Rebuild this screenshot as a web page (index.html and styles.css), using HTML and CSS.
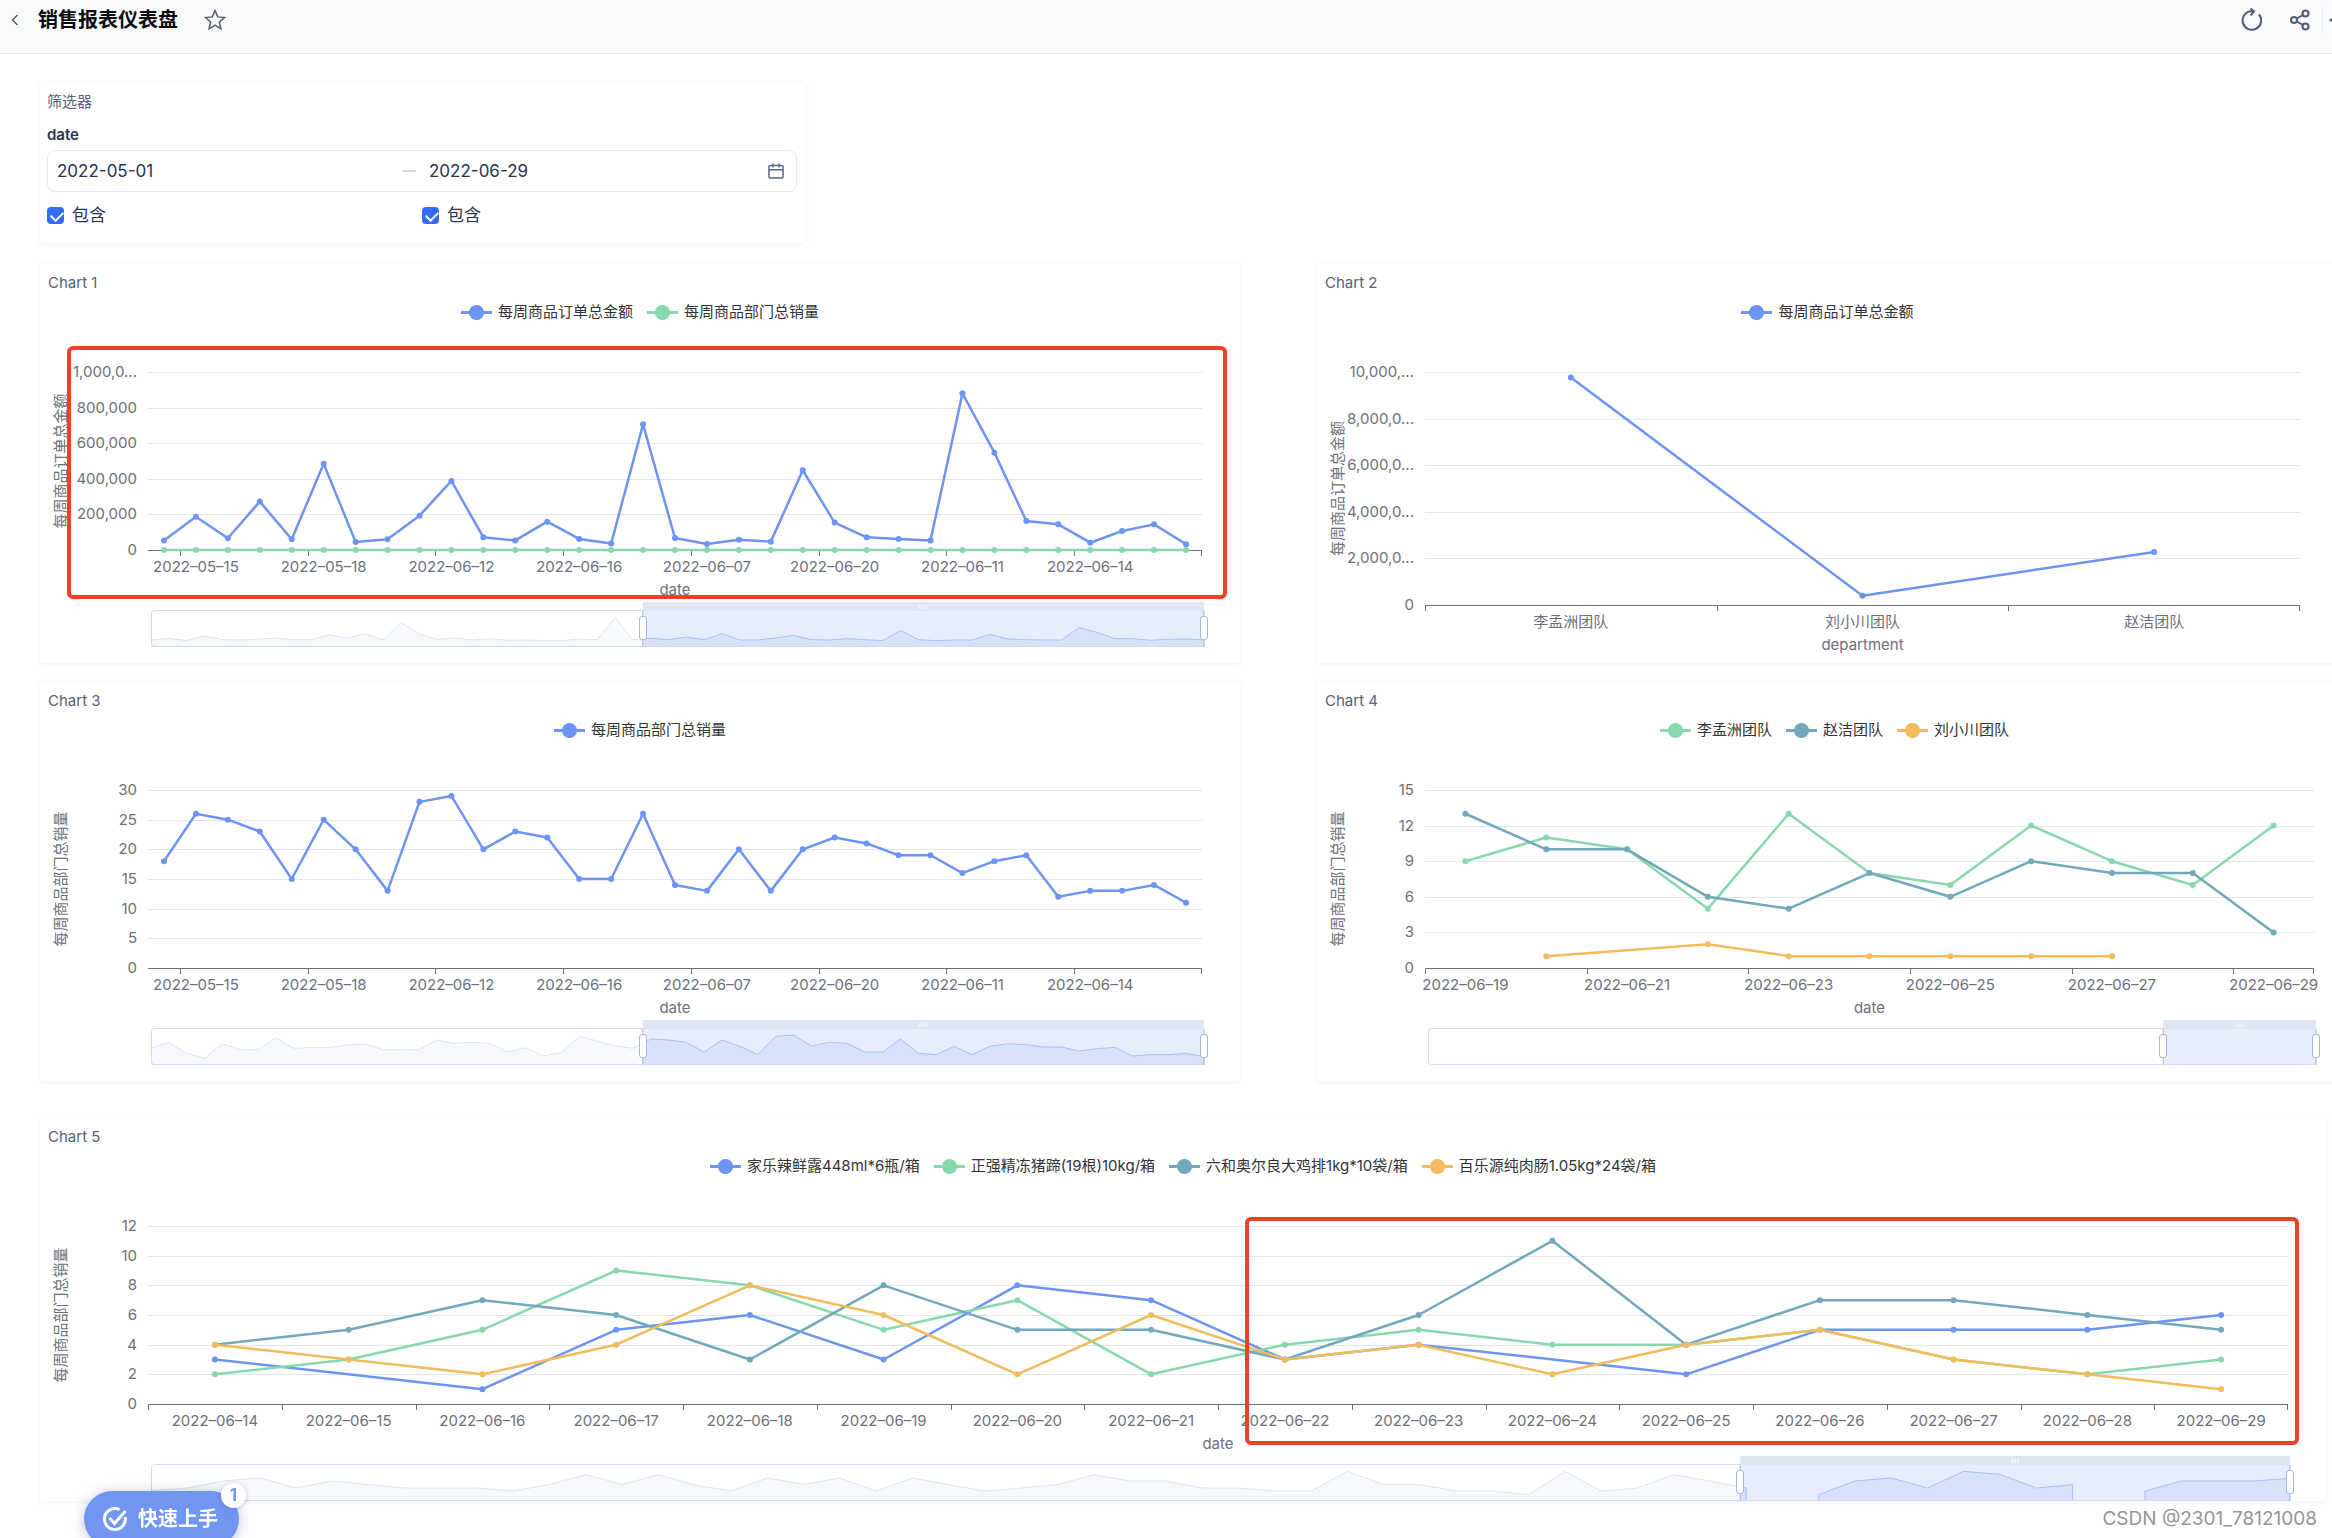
FILE: index.html
```html
<!DOCTYPE html>
<html lang="zh-CN">
<head>
<meta charset="utf-8">
<meta name="viewport" content="width=device-width, initial-scale=1">
<title>销售报表仪表盘</title>
<link rel="stylesheet" href="styles.css">
</head>
<body>
<header class="topbar">
  <button class="icon-btn back" type="button" aria-label="返回">
    <svg width="8" height="12" viewBox="0 0 8 12"><path d="M6.5 1 1.5 6l5 5"/></svg>
  </button>
  <h1 class="topbar-title">销售报表仪表盘</h1>
  <button class="icon-btn star" type="button" aria-label="收藏">
    <svg width="22" height="22" viewBox="0 0 22 22"><path d="M11 1.500l2.700 6.400 6.800.6-5.200 4.500 1.600 6.800-5.900-3.600-5.900 3.600 1.600-6.800L1.500 8.500l6.800-.6z"/></svg>
  </button>
  <div class="topbar-actions">
    <button class="icon-btn" type="button" aria-label="刷新">
      <svg width="22" height="24" viewBox="0 0 22 24"><path d="M19 6.500A9.300 9.300 0 1 1 11 3.200h3M10.500.5l3.500 2.900-3.400 4"/></svg>
    </button>
    <button class="icon-btn share" type="button" aria-label="分享">
      <svg width="20" height="22" viewBox="0 0 20 22"><circle cx="4" cy="11" r="3"/><circle cx="15.500" cy="4.500" r="3"/><circle cx="15.500" cy="17.500" r="3"/><path d="M6.700 9.500 12.900 6M6.700 12.500l6.200 3.500"/></svg>
    </button>
    <span class="divider"></span>
    <button class="icon-btn more" type="button" aria-label="更多">
      <svg width="20" height="20" viewBox="0 0 20 20"><circle class="dot" cx="3" cy="10" r="1.500"/><circle class="dot" cx="10" cy="10" r="1.500"/><circle class="dot" cx="17" cy="10" r="1.500"/></svg>
    </button>
  </div>
</header>

<main class="board">
  <section class="card filter">
    <h2 class="card-title">筛选器</h2>
    <label class="filter-name" for="date-from">date</label>
    <div class="range">
      <input class="range-input" id="date-from" type="text" value="2022-05-01">
      <span class="range-dash"></span>
      <input class="range-input" type="text" value="2022-06-29" aria-label="结束日期">
      <svg class="range-icon" width="16" height="16" viewBox="0 0 16 16"><rect x="1" y="2.500" width="14" height="12.500" rx="1"/><path d="M1 6.800h14M4.800.5v4M11.200.5v4"/></svg>
    </div>
    <div class="includes">
      <label class="check"><input type="checkbox" checked>包含</label>
      <label class="check"><input type="checkbox" checked>包含</label>
    </div>
  </section>

  <div class="pairs">
    <section class="card" data-chart="chart1">
      <h2 class="card-title">Chart 1</h2>
      <ul class="legend">
        <li class="key blue">每周商品订单总金额</li>
        <li class="key green">每周商品部门总销量</li>
      </ul>
      <div class="marker marker-whole"></div>
    </section>
    <section class="card" data-chart="chart2">
      <h2 class="card-title">Chart 2</h2>
      <ul class="legend"><li class="key blue">每周商品订单总金额</li></ul>
    </section>
    <section class="card" data-chart="chart3">
      <h2 class="card-title">Chart 3</h2>
      <ul class="legend"><li class="key blue">每周商品部门总销量</li></ul>
    </section>
    <section class="card card-wide" data-chart="chart4">
      <h2 class="card-title">Chart 4</h2>
      <ul class="legend">
        <li class="key green">李孟洲团队</li>
        <li class="key teal">赵洁团队</li>
        <li class="key orange">刘小川团队</li>
      </ul>
    </section>
  </div>

  <section class="card card-last" data-chart="chart5">
    <h2 class="card-title">Chart 5</h2>
    <ul class="legend">
      <li class="key blue">家乐辣鲜露448ml*6瓶/箱</li>
      <li class="key green">正强精冻猪蹄(19根)10kg/箱</li>
      <li class="key teal">六和奥尔良大鸡排1kg*10袋/箱</li>
      <li class="key orange">百乐源纯肉肠1.05kg*24袋/箱</li>
    </ul>
    <div class="marker marker-half"></div>
  </section>
</main>

<button class="quick" type="button">
  <svg width="26" height="26" viewBox="0 0 26 26"><path d="M17.500 3.600A10.500 10.500 0 1 0 23.200 11M7.500 12l5 5.500L23.500 5"/></svg>
  快速上手
  <span class="quick-badge">1</span>
</button>
<p class="credit">CSDN @2301_78121008</p>
<script src="charts.js"></script>
</body>
</html>
```

FILE: styles.css
```css
* { box-sizing: border-box; }

body {
  position: relative;
  min-height: 100vh;
  margin: 0;
  overflow: hidden;
  background: #fff;
  color: #2a3350;
  font: 15px/20px Inter, "Noto Sans CJK SC", sans-serif;
}

h1, h2, p, ul { margin: 0; padding: 0; }
ul { list-style: none; }

/* top bar */
.topbar {
  display: flex;
  align-items: center;
  height: 54px;
  padding: 0 0 14px 10px;
  border-bottom: 1px solid #e6e9f2;
  background: #f8f9fb;
}
.topbar-title {
  margin-left: 18px;
  color: #0b0d12;
  font-size: 20px;
  font-weight: 700;
  line-height: 28px;
}
.icon-btn {
  display: flex;
  align-items: center;
  justify-content: center;
  width: 20px;
  height: 24px;
  padding: 0;
  border: 0;
  background: none;
}
.icon-btn svg {
  flex: none;
  fill: none;
  stroke: #515c76;
  stroke-width: 2;
}
.icon-btn .dot { fill: #515c76; stroke: none; }
.back { width: 10px; }
.back svg, .star svg { stroke-width: 1.5; }
.star { margin-left: 27px; }
.topbar-actions {
  display: flex;
  align-items: center;
  margin: 0 -16px 0 auto;
}
.share { margin-left: 29px; }
.divider {
  width: 1px;
  height: 28px;
  margin: 0 5px 0 12px;
  background: #e6e9f2;
}

/* board */
.board { padding: 29px 6px 20px 40px; }
.card {
  position: relative;
  padding-top: 9px;
  background: #fff;
  box-shadow: 0 1px 5px rgba(30, 40, 70, .06);
}
.card-title {
  padding-left: 8px;
  color: #56617a;
  font-size: 15px;
  font-weight: 400;
  line-height: 20px;
}
.pairs {
  display: grid;
  grid-template-columns: 1200fr 1021fr;
  gap: 19px 77px;
  margin: 21px -12px 37px 0;
}
.card-wide { margin-right: -14px; }

/* filter */
.filter {
  display: flex;
  flex-direction: column;
  width: min(100%, 765px);
  padding: 9px 8px 16px 7px;
}
.filter .card-title { padding-left: 0; }
.filter-name { margin: 13px 0 5px; font-weight: 600; }
.range {
  display: grid;
  grid-template-columns: 346fr 26px 339fr 16px;
  align-items: center;
  height: 42px;
  padding: 0 12px 0 9px;
  border: 1px solid #e6e9f2;
  border-radius: 8px;
}
.range-input {
  width: 100%;
  padding: 0;
  border: 0;
  outline: 0;
  background: none;
  color: #2a3350;
  font: 17px/24px Inter, sans-serif;
}
.range-dash { width: 13px; height: 2px; background: #d3d6dc; }
.range-icon { fill: none; stroke: #5d6880; stroke-width: 1.5; }
.includes {
  display: grid;
  grid-template-columns: 1fr 1fr;
  margin-top: 11px;
}
.check {
  display: flex;
  align-items: center;
  gap: 8px;
  font-size: 17px;
  line-height: 24px;
}
.check input {
  width: 17px;
  height: 17px;
  margin: 0;
  appearance: none;
  border-radius: 4px;
  background: #336df4;
}
.check input::after {
  content: "";
  display: block;
  width: 10px;
  height: 6px;
  margin: 4px;
  border: solid #fff;
  border-width: 0 0 2px 2px;
  transform: rotate(-45deg);
}

/* legend */
.legend {
  display: flex;
  justify-content: center;
  gap: 14px;
  margin-top: 8px;
  color: #333;
  line-height: 22px;
  white-space: nowrap;
}
.key { display: flex; align-items: center; gap: 6px; }
.key::before {
  content: "";
  width: 31px;
  height: 15px;
  background:
    radial-gradient(circle at center, currentColor 7px, transparent 8px),
    linear-gradient(currentColor, currentColor) center / 100% 3px no-repeat;
}
.blue::before { color: #6e94f2; }
.green::before { color: #89d8ad; }
.teal::before { color: #72a8bc; }
.orange::before { color: #f2bc5c; }

/* plot */
.plot, .zoom-art { display: block; width: 100%; overflow: visible; }
.plot text { fill: #6e7079; font-size: 15px; }
.grid-line { stroke: #e0e6f1; shape-rendering: crispEdges; }
.axis-line { stroke: #6e7079; fill: none; shape-rendering: crispEdges; }
.series { fill: none; stroke-width: 2.5; stroke-linejoin: round; }

/* zoom strip */
.zoom {
  position: relative;
  height: 45px;
  margin: 0 36px 16px 111px;
}
.zoom-frame { fill: none; stroke: #d2dbee; }
.zoom-shade { fill: #f6f8fc; stroke: #dde4f1; }
.zoom-window { fill: #e7edfc; }
.zoom-shade-on { fill: #d7e1fa; stroke: #a9bff2; }
.zoom-grip { fill: #dfe5f1; }
.zoom-ticks { stroke: #fff; }
.zoom-edge { stroke: #acb8d1; }
.zoom-thumb {
  position: absolute;
  top: 14px;
  left: -4px;
  width: calc(100% + 8px);
  height: 24px;
  margin: 0;
  appearance: none;
  background: none;
  pointer-events: none;
}
.zoom-thumb::-webkit-slider-thumb {
  width: 8px;
  height: 24px;
  appearance: none;
  border: 1px solid #acb8d1;
  border-radius: 3px;
  background: #fff;
  pointer-events: auto;
}

/* red frames laid over the plots */
.marker {
  position: absolute;
  border: 4px solid #ea4127;
  border-radius: 6px;
}
.marker-whole { top: 82px; right: 13px; left: 27px; height: 253px; }
.marker-half { top: 99px; right: 27px; left: 52.7%; height: 228px; }

/* quick start */
.quick {
  position: fixed;
  bottom: -9px;
  left: 84px;
  display: flex;
  align-items: center;
  gap: 10px;
  height: 56px;
  padding: 0 21px 0 18px;
  border: 0;
  border-radius: 28px;
  background: #7096f2;
  box-shadow: 0 2px 14px rgba(40, 60, 110, .3);
  color: #fff;
  font: 700 20px/28px Inter, "Noto Sans CJK SC", sans-serif;
}
.quick svg { fill: none; stroke: #fff; stroke-width: 3; }
.quick-badge {
  position: absolute;
  top: -8px;
  right: -7px;
  width: 25px;
  height: 25px;
  border-radius: 50%;
  background: #fff;
  box-shadow: 0 1px 5px rgba(40, 60, 110, .25);
  color: #7096f2;
  font-size: 17px;
  line-height: 25px;
  text-align: center;
}
.credit {
  position: absolute;
  right: 15px;
  bottom: 5px;
  color: #939599;
  font-size: 19px;
  line-height: 28px;
}
```

FILE: charts.js
```js
const COLORS = { blue: '#6e94f2', green: '#89d8ad', teal: '#72a8bc', orange: '#f2bc5c' };
const GRID = { left: 108, right: 38, top: 49 };

function days(month, from, to) {
  const out = [];
  for (let d = from; d <= to; d++) out.push('2022–' + month + '–' + String(d).padStart(2, '0'));
  return out;
}

/* 33 visible days; every fourth one carries a label */
const sparse = Array(33).fill('');
['2022–05–15', '2022–05–18', '2022–06–12', '2022–06–16', '2022–06–07', '2022–06–20', '2022–06–11', '2022–06–14']
  .forEach((label, i) => { sparse[1 + i * 4] = label; });

const CHARTS = {
  chart1: {
    categories: sparse, first: 1, every: 4, max: 1000,
    yLabels: ['0', '200,000', '400,000', '600,000', '800,000', '1,000,0...'],
    xName: 'date', yName: '每周商品订单总金额',
    series: [
      ['blue', [54, 187, 66, 272, 60, 485, 45, 60, 193, 388, 71, 54, 159, 62, 36, 706, 67, 34, 58, 47, 448, 154, 71, 62, 54, 880, 547, 163, 144, 41, 107, 144, 32]],
      ['green', Array(33).fill(0)]
    ],
    zoom: { start: 46.7, shade: [21, 26, 19, 33, 22, 21, 24, 27, 22, 22, 37, 26, 40, 21, 74, 40, 23, 27, 21, 25, 20, 21, 19, 19, 24, 22, 89, 22, 26, 22, 30, 22, 40, 21, 21, 27, 35, 22, 21, 25, 22, 19, 50, 22, 19, 21, 21, 38, 24, 22, 21, 21, 58, 44, 25, 25, 20, 23, 24, 21] }
  },
  chart2: {
    categories: ['李孟洲团队', '刘小川团队', '赵洁团队'], first: 0, every: 1, max: 10,
    yLabels: ['0', '2,000,0...', '4,000,0...', '6,000,0...', '8,000,0...', '10,000,...'],
    xName: 'department', yName: '每周商品订单总金额',
    series: [['blue', [9.76, 0.4, 2.27]]]
  },
  chart3: {
    categories: sparse, first: 1, every: 4, max: 30,
    yLabels: ['0', '5', '10', '15', '20', '25', '30'],
    xName: 'date', yName: '每周商品部门总销量',
    series: [['blue', [18, 26, 25, 23, 15, 25, 20, 13, 28, 29, 20, 23, 22, 15, 15, 26, 14, 13, 20, 13, 20, 22, 21, 19, 19, 16, 18, 19, 12, 13, 13, 14, 11]]],
    zoom: { start: 46.7, shade: [51, 68, 35, 20, 64, 46, 46, 82, 50, 53, 53, 60, 63, 46, 46, 46, 75, 65, 68, 65, 39, 52, 27, 38, 86, 72, 57, 50, 78, 75, 68, 39, 75, 56, 31, 86, 90, 57, 68, 65, 39, 39, 78, 35, 31, 56, 31, 56, 64, 61, 54, 54, 42, 49, 53, 27, 31, 31, 35, 25] }
  },
  chart4: {
    categories: days('06', 19, 29), first: 0, every: 2, max: 15,
    yLabels: ['0', '3', '6', '9', '12', '15'],
    xName: 'date', yName: '每周商品部门总销量',
    series: [
      ['green', [9, 11, 10, 5, 13, 8, 7, 12, 9, 7, 12]],
      ['teal', [13, 10, 10, 6, 5, 8, 6, 9, 8, 8, 3]],
      ['orange', [null, 1, null, 2, 1, 1, 1, 1, 1, null, null]]
    ],
    zoom: { start: 82.8, shade: [] }
  },
  chart5: {
    categories: days('06', 14, 29), first: 0, every: 1, max: 12,
    yLabels: ['0', '2', '4', '6', '8', '10', '12'],
    xName: 'date', yName: '每周商品部门总销量',
    series: [
      ['blue', [3, null, 1, 5, 6, 3, 8, 7, 3, 4, null, 2, 5, 5, 5, 6]],
      ['green', [2, 3, 5, 9, 8, 5, 7, 2, 4, 5, 4, 4, 5, 3, 2, 3]],
      ['teal', [4, 5, 7, 6, 3, 8, 5, 5, 3, 6, 11, 4, 7, 7, 6, 5]],
      ['orange', [4, 3, 2, 4, 8, 6, 2, 6, 3, 4, 2, 4, 5, 3, 2, 1]]
    ],
    zoom: { start: 74.3, shade: [31, 39, 60, 69, 39, 60, 49, 39, 39, 39, 30, 50, 79, 50, 79, 48, 30, 69, 50, 69, 30, 69, 49, 30, 39, 49, 79, 60, 60, 39, 39, 30, 30, 89, 49, 49, 30, 30, 19, 89, 30, 39, 79, 60, 39, null, 19, 60, 69, 39, 89, 80, 39, 49, null, 30, 60, 60, 60, 68] }
  }
};

function plotMarkup(chart, width) {
  const right = width - GRID.right;
  const bottom = chart.zoom ? 227 : 282;
  const step = (right - GRID.left) / chart.categories.length;
  const yOf = v => bottom - v / chart.max * (bottom - GRID.top);
  const xOf = i => GRID.left + step * (i + 0.5);
  let s = '';

  chart.yLabels.forEach((label, i) => {
    const y = Math.round(bottom - i * (bottom - GRID.top) / (chart.yLabels.length - 1));
    if (i) s += `<line class="grid-line" x1="${GRID.left}" x2="${right}" y1="${y + 0.5}" y2="${y + 0.5}"/>`;
    s += `<text x="${GRID.left - 11}" y="${y + 5}" text-anchor="end">${label}</text>`;
  });

  let axis = `M${GRID.left} ${bottom + 0.5}H${right}`;
  for (let i = chart.first; i < chart.categories.length; i += chart.every) {
    axis += `M${Math.round(GRID.left + step * i) + 0.5} ${bottom}v6`;
    s += `<text x="${xOf(i)}" y="${bottom + 22}" text-anchor="middle">${chart.categories[i]}</text>`;
  }
  s += `<path class="axis-line" d="${axis}M${Math.round(right) - 0.5} ${bottom}v6"/>`;

  const midX = (GRID.left + right) / 2;
  const midY = (GRID.top + bottom) / 2;
  s += `<text x="${midX}" y="${bottom + 45}" text-anchor="middle">${chart.xName}</text>`;
  s += `<text transform="translate(26 ${midY}) rotate(-90)" text-anchor="middle">${chart.yName}</text>`;

  chart.series.forEach(([color, values]) => {
    const pts = values.map((v, i) => v === null ? null : [xOf(i), yOf(v)]).filter(Boolean);
    s += `<polyline class="series" stroke="${COLORS[color]}" points="${pts.join(' ')}"/>`;
    pts.forEach(p => { s += `<circle cx="${p[0]}" cy="${p[1]}" r="3" fill="${COLORS[color]}"/>`; });
  });
  return s;
}

function shadePath(shade, width) {
  const step = width / (shade.length - 1);
  let d = '', open = false, last = 0;
  shade.forEach((v, i) => {
    const x = i * step;
    if (v === null) {
      if (open) d += `L${last} 45Z`;
      open = false;
      return;
    }
    d += (open ? 'L' : `M${x} 45L`) + `${x} ${45 - v / 3}`;
    open = true;
    last = x;
  });
  return open ? d + `L${last} 45Z` : d;
}

function zoomMarkup(id, zoom, width) {
  const from = width * zoom.start / 100;
  const mid = Math.round((from + width) / 2);
  const d = shadePath(zoom.shade, width);
  return `<clipPath id="${id}-off"><rect x="0" y="0" width="${from}" height="45"/></clipPath>
    <clipPath id="${id}-on"><rect x="${from}" y="0" width="${width - from}" height="45"/></clipPath>
    <path class="zoom-shade" clip-path="url(#${id}-off)" d="${d}"/>
    <rect class="zoom-window" x="${from}" y="8" width="${width - from}" height="37"/>
    <path class="zoom-shade-on" clip-path="url(#${id}-on)" d="${d}"/>
    <rect class="zoom-frame" x=".5" y="8.5" width="${width - 1}" height="36" rx="3"/>
    <rect class="zoom-grip" x="${from}" y="0" width="${width - from}" height="9" rx="1"/>
    <path class="zoom-ticks" d="M${mid - 3} 3v4M${mid} 3v4M${mid + 3} 3v4"/>
    <path class="zoom-edge" d="M${from} 9v36M${width} 9v36"/>`;
}

function build(card) {
  const id = card.dataset.chart;
  const chart = CHARTS[id];
  const svg = document.createElementNS('http://www.w3.org/2000/svg', 'svg');
  svg.setAttribute('class', 'plot');
  svg.setAttribute('height', chart.zoom ? 279 : 340);
  card.append(svg);

  let art = null;
  if (chart.zoom) {
    const strip = document.createElement('div');
    strip.className = 'zoom';
    strip.innerHTML = `<svg class="zoom-art" height="45"></svg>
      <input class="zoom-thumb" type="range" step="0.1" value="${chart.zoom.start}" aria-label="起始">
      <input class="zoom-thumb" type="range" step="0.1" value="100" aria-label="结束">`;
    card.append(strip);
    art = strip.querySelector('svg');
  }

  return () => {
    svg.innerHTML = plotMarkup(chart, card.clientWidth);
    if (art) art.innerHTML = zoomMarkup(id, chart.zoom, art.parentElement.clientWidth);
  };
}

const draws = [...document.querySelectorAll('[data-chart]')].map(build);
const drawAll = () => draws.forEach(draw => draw());
drawAll();
window.addEventListener('resize', drawAll);
```
